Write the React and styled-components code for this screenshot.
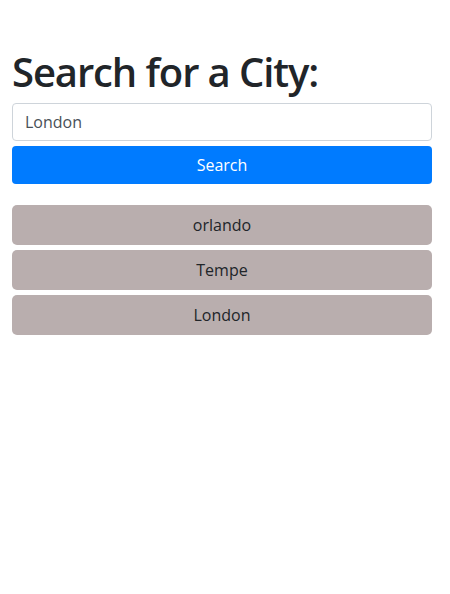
import React, { useState } from 'react';
import styled, { createGlobalStyle } from 'styled-components';

const GlobalStyle = createGlobalStyle`
  body {
    margin: 0;
    font-family: "Open Sans", "Noto Sans", sans-serif;
    color: #212529;
    background: #fff;
  }
  * { box-sizing: border-box; }
`;

const Page = styled.div`
  padding: 48px 18px 0 12px;
`;

const Title = styled.h1`
  margin: 0 0 7px;
  font-size: 40px;
  font-weight: 600;
  line-height: 48px;
  letter-spacing: -1.1px;
  color: #212529;
`;

const Form = styled.form`
  display: flex;
  flex-direction: column;
  gap: 5px;
`;

const Input = styled.input`
  height: 38px;
  padding: 6px 12px;
  font-family: inherit;
  font-size: 16px;
  color: #495057;
  border: 1px solid #ced4da;
  border-radius: 4px;
  outline: none;
`;

const Button = styled.button`
  height: 38px;
  border: none;
  border-radius: 4px;
  background-color: #007bff;
  color: #fff;
  font-family: inherit;
  font-size: 16px;
  cursor: pointer;
`;

const History = styled.div`
  display: flex;
  flex-direction: column;
  gap: 5px;
  margin-top: 21px;
`;

const CityButton = styled.button`
  height: 40px;
  border: none;
  border-radius: 5px;
  background-color: #b9aeae;
  color: #212529;
  font-family: inherit;
  font-size: 16px;
  cursor: pointer;
`;

const App = () => {
  const [city, setCity] = useState('London');
  const [history] = useState(['orlando', 'Tempe', 'London']);

  return (
    <Page>
      <GlobalStyle />
      <Title>Search for a City:</Title>
      <Form onSubmit={(e) => e.preventDefault()}>
        <Input value={city} onChange={(e) => setCity(e.target.value)} />
        <Button type="submit">Search</Button>
      </Form>
      <History>
        {history.map((name) => (
          <CityButton key={name} onClick={() => setCity(name)}>
            {name}
          </CityButton>
        ))}
      </History>
    </Page>
  );
};

export default App;
